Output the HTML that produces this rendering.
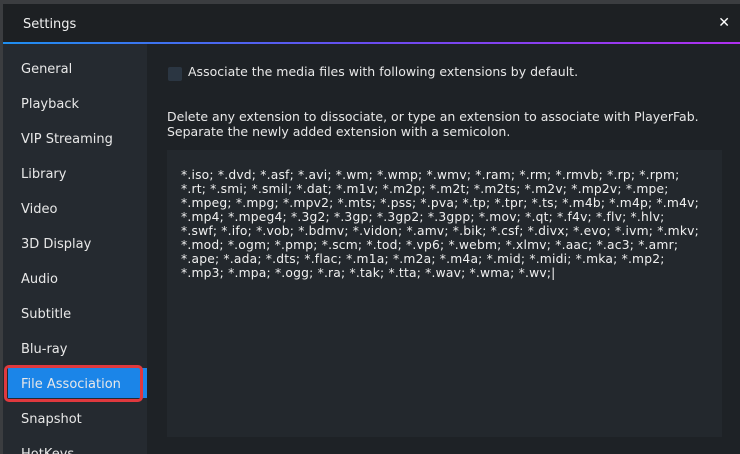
<!DOCTYPE html>
<html><head><meta charset="utf-8"><style>
*{margin:0;padding:0;box-sizing:border-box}
html{width:740px;height:454px;overflow:hidden}
body{width:740px;height:454px;background:#3b3d40;overflow:hidden;font-family:"DejaVu Sans","Liberation Sans",sans-serif;color:#e8e8e8;position:relative}
.win{position:absolute;left:3px;top:4px;width:737px;height:450px;background:#1e2226;overflow:hidden}
.title{position:absolute;left:0;top:0;width:737px;height:38px;background:#1d2023}
.title span{position:absolute;left:20px;top:13px;font-size:13px;color:#f0f0f0}
.title b{position:absolute;right:10px;top:11px;font-size:14px;color:#fff}
.line{position:absolute;left:0;top:38px;width:737px;height:2px;background:linear-gradient(90deg,#1e8ff0,#6a4cf0 50%,#b030f0)}
.side{position:absolute;left:0;top:40px;width:144px;height:410px;background:#252a30}
.item{position:absolute;left:18px;font-size:13px;color:#e8e8e8}
.sel{position:absolute;left:5px;top:324px;width:139px;height:30px;background:#1b85e8}
.ring{position:absolute;left:1px;top:321px;width:139px;height:37px;border:3px solid #e0393e;border-radius:5px}
.cb{position:absolute;left:165px;top:63px;width:14px;height:14px;background:#2b3642;border-radius:2px}
.t{position:absolute;font-size:12.5px;color:#e8e8e8}
.box{position:absolute;left:164px;top:146px;width:555px;height:287px;background:#23282d}
.ext{position:absolute;left:14px;top:18px;font-size:12.3px;line-height:14px;white-space:pre;color:#f0f0f0;letter-spacing:0.2px}
</style></head><body>
<div class="win">
<div class="title"><span>Settings</span><b>✕</b></div>
<div class="line"></div>
<div class="side">
<div class="sel"></div><div class="ring"></div>
<div class="item" style="top:18px">General</div>
<div class="item" style="top:53px">Playback</div>
<div class="item" style="top:88px">VIP Streaming</div>
<div class="item" style="top:123px">Library</div>
<div class="item" style="top:158px">Video</div>
<div class="item" style="top:193px">3D Display</div>
<div class="item" style="top:228px">Audio</div>
<div class="item" style="top:263px">Subtitle</div>
<div class="item" style="top:298px">Blu-ray</div>
<div class="item" style="top:333px">File Association</div>
<div class="item" style="top:368px">Snapshot</div>
<div class="item" style="top:403px">HotKeys</div>
</div>
<div class="cb"></div>
<div class="t" style="left:185px;top:60px">Associate the media files with following extensions by default.</div>
<div class="t" style="left:164px;top:105px;line-height:15px">Delete any extension to dissociate, or type an extension to associate with PlayerFab.<br>Separate the newly added extension with a semicolon.</div>
<div class="box"><div class="ext">*.iso; *.dvd; *.asf; *.avi; *.wm; *.wmp; *.wmv; *.ram; *.rm; *.rmvb; *.rp; *.rpm;
*.rt; *.smi; *.smil; *.dat; *.m1v; *.m2p; *.m2t; *.m2ts; *.m2v; *.mp2v; *.mpe;
*.mpeg; *.mpg; *.mpv2; *.mts; *.pss; *.pva; *.tp; *.tpr; *.ts; *.m4b; *.m4p; *.m4v;
*.mp4; *.mpeg4; *.3g2; *.3gp; *.3gp2; *.3gpp; *.mov; *.qt; *.f4v; *.flv; *.hlv;
*.swf; *.ifo; *.vob; *.bdmv; *.vidon; *.amv; *.bik; *.csf; *.divx; *.evo; *.ivm; *.mkv;
*.mod; *.ogm; *.pmp; *.scm; *.tod; *.vp6; *.webm; *.xlmv; *.aac; *.ac3; *.amr;
*.ape; *.ada; *.dts; *.flac; *.m1a; *.m2a; *.m4a; *.mid; *.midi; *.mka; *.mp2;
*.mp3; *.mpa; *.ogg; *.ra; *.tak; *.tta; *.wav; *.wma; *.wv;|</div></div>
</div>
</body></html>
